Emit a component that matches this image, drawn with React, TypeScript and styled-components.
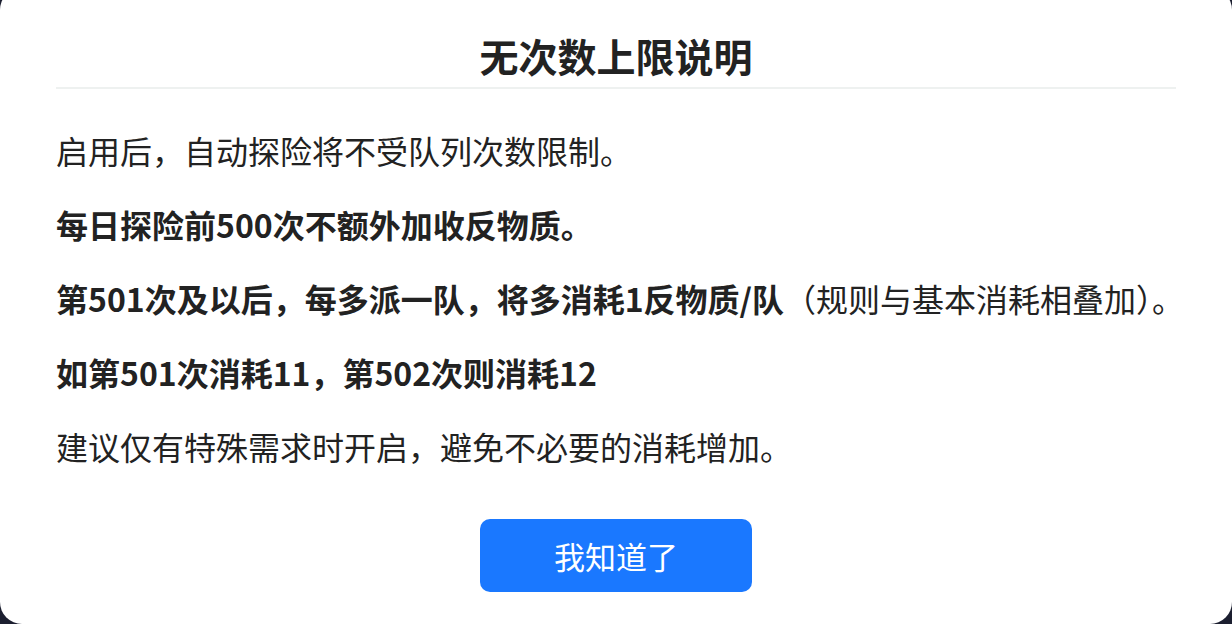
import styled, { createGlobalStyle } from "styled-components";

const GlobalStyle = createGlobalStyle`
  html, body {
    margin: 0;
    padding: 0;
    background: #1c1f30;
    overflow: hidden;
  }
  body {
    font-family: "Noto Sans CJK SC", "Noto Sans", sans-serif;
  }
`;

const Modal = styled.div`
  box-sizing: border-box;
  width: 1232px;
  height: 636px;
  margin-top: -12px;
  background: #ffffff;
  border-radius: 22px;
  padding: 42px 56px 0;
  display: flex;
  flex-direction: column;
`;

const Header = styled.div`
  padding-bottom: 7px;
  border-bottom: 2px solid #eef1f0;
  text-align: center;
`;

const Title = styled.h1`
  margin: 0;
  font-size: 39px;
  line-height: 50px;
  font-weight: 700;
  color: #222222;
`;

const Body = styled.div`
  padding-top: 37px;
  display: flex;
  flex-direction: column;
  gap: 26px;
`;

const Paragraph = styled.p<{ $bold?: boolean }>`
  margin: 0;
  font-size: 32px;
  line-height: 48px;
  font-weight: ${(p) => (p.$bold ? 700 : 400)};
  color: #222222;
  white-space: nowrap;
`;

const Normal = styled.span`
  font-weight: 400;
`;

const Footer = styled.div`
  display: flex;
  justify-content: center;
  padding-top: 49px;
`;

const ConfirmButton = styled.button`
  width: 272px;
  height: 73px;
  border: none;
  border-radius: 10px;
  background: #1a78ff;
  color: #ffffff;
  font-family: inherit;
  font-size: 31px;
  cursor: pointer;
`;

const lines = [
  { text: "启用后，自动探险将不受队列次数限制。", bold: false },
  { text: "每日探险前500次不额外加收反物质。", bold: true },
  {
    text: "第501次及以后，每多派一队，将多消耗1反物质/队",
    tail: "（规则与基本消耗相叠加）。",
    bold: true,
  },
  { text: "如第501次消耗11，第502次则消耗12", bold: true },
  { text: "建议仅有特殊需求时开启，避免不必要的消耗增加。", bold: false },
];

export default function App() {
  return (
    <>
      <GlobalStyle />
      <Modal>
        <Header>
          <Title>无次数上限说明</Title>
        </Header>
        <Body>
          {lines.map((line, i) => (
            <Paragraph key={i} $bold={line.bold}>
              {line.text}
              {line.tail && <Normal>{line.tail}</Normal>}
            </Paragraph>
          ))}
        </Body>
        <Footer>
          <ConfirmButton>我知道了</ConfirmButton>
        </Footer>
      </Modal>
    </>
  );
}
